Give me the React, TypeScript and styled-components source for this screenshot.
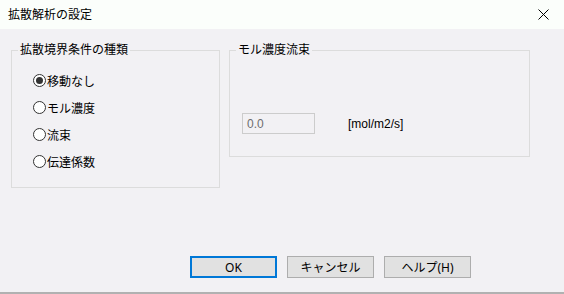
import React from 'react';
import styled, { createGlobalStyle } from 'styled-components';

const GlobalStyle = createGlobalStyle`
  html, body {
    margin: 0;
    padding: 0;
    background: #f2f1f4;
  }
  body {
    font-family: "Noto Sans", "Noto Sans CJK JP", sans-serif;
    font-size: 12px;
    color: #000;
  }
`;

const Window = styled.div`
  width: 564px;
  height: 294px;
  box-sizing: border-box;
  display: flex;
  flex-direction: column;
  background: #f2f1f4;
  border-bottom: 2px solid #b1b1b1;
`;

const TitleBar = styled.div`
  height: 29px;
  flex-shrink: 0;
  display: flex;
  align-items: center;
  justify-content: space-between;
  padding: 0 8px 0 8px;
  background: #fbfefb;
  box-sizing: border-box;
`;

const Title = styled.span`
  font-size: 12px;
  line-height: 16px;
`;

const CloseButton = styled.div`
  width: 24px;
  height: 24px;
  display: flex;
  align-items: center;
  justify-content: center;
  margin-right: 1px;
`;

const Body = styled.div`
  flex: 1;
  display: flex;
  flex-direction: column;
  padding: 13px 0 0 11px;
`;

const GroupRow = styled.div`
  display: flex;
  align-items: flex-start;
  gap: 9px;
`;

const Group = styled.fieldset<{ $w: number; $h: number }>`
  margin: 0;
  padding: 0;
  width: ${(p) => p.$w}px;
  height: ${(p) => p.$h}px;
  box-sizing: border-box;
  border: 1px solid #dcdcdc;
  min-width: 0;
`;

const Legend = styled.legend`
  margin-left: 6px;
  padding: 0 2px 0 2px;
  font-size: 12px;
  line-height: 16px;
`;

const RadioList = styled.div`
  display: flex;
  flex-direction: column;
  padding: 9px 0 0 21px;
`;

const RadioRow = styled.label`
  display: flex;
  align-items: center;
  height: 27px;
  gap: 1px;
`;

const RadioCircle = styled.span<{ $checked?: boolean }>`
  width: 13px;
  height: 13px;
  box-sizing: border-box;
  border-radius: 50%;
  border: 1px solid #333;
  background: #fff;
  display: flex;
  align-items: center;
  justify-content: center;

  &::after {
    content: '';
    width: 7px;
    height: 7px;
    border-radius: 50%;
    background: ${(p) => (p.$checked ? '#333' : 'transparent')};
  }
`;

const FluxRow = styled.div`
  display: flex;
  align-items: center;
  padding: 55px 0 0 12px;
`;

const ValueBox = styled.div`
  width: 73px;
  height: 21px;
  box-sizing: border-box;
  border: 1px solid #cccccc;
  background: #f2f1f4;
  color: #6d6d6d;
  padding: 0 0 0 4px;
  display: flex;
  align-items: center;
  font-family: "Liberation Sans", Arial, sans-serif;
  font-size: 12px;
`;

const Unit = styled.span`
  margin-left: 33px;
  font-family: "Liberation Sans", Arial, sans-serif;
  font-size: 12px;
`;

const ButtonRow = styled.div`
  margin-top: auto;
  margin-bottom: 14px;
  display: flex;
  gap: 10px;
  padding-left: 179px;
`;

const Button = styled.button<{ $default?: boolean }>`
  width: 87px;
  height: 22px;
  box-sizing: border-box;
  margin: 0;
  padding: 0;
  background: #e1e1e1;
  border: ${(p) => (p.$default ? '2px solid #0078d7' : '1px solid #adadad')};
  font-family: "Noto Sans", "Noto Sans CJK JP", sans-serif;
  font-size: 12px;
  color: #000;
  border-radius: 0;
`;

const options = ['移動なし', 'モル濃度', '流束', '伝達係数'];

const App: React.FC = () => {
  const [selected, setSelected] = React.useState(0);

  return (
    <>
      <GlobalStyle />
      <Window>
        <TitleBar>
          <Title>拡散解析の設定</Title>
          <CloseButton>
            <svg width="11" height="11" viewBox="0 0 11 11" stroke="#000" strokeWidth="1">
              <path d="M0.5 0.5L10.5 10.5M10.5 0.5L0.5 10.5" />
            </svg>
          </CloseButton>
        </TitleBar>
        <Body>
          <GroupRow>
            <Group $w={209} $h={146}>
              <Legend>拡散境界条件の種類</Legend>
              <RadioList>
                {options.map((o, i) => (
                  <RadioRow key={o} onClick={() => setSelected(i)}>
                    <RadioCircle $checked={selected === i} />
                    {o}
                  </RadioRow>
                ))}
              </RadioList>
            </Group>
            <Group $w={301} $h={115}>
              <Legend>モル濃度流束</Legend>
              <FluxRow>
                <ValueBox>0.0</ValueBox>
                <Unit>[mol/m2/s]</Unit>
              </FluxRow>
            </Group>
          </GroupRow>
          <ButtonRow>
            <Button $default>OK</Button>
            <Button>キャンセル</Button>
            <Button>ヘルプ(H)</Button>
          </ButtonRow>
        </Body>
      </Window>
    </>
  );
};

export default App;
